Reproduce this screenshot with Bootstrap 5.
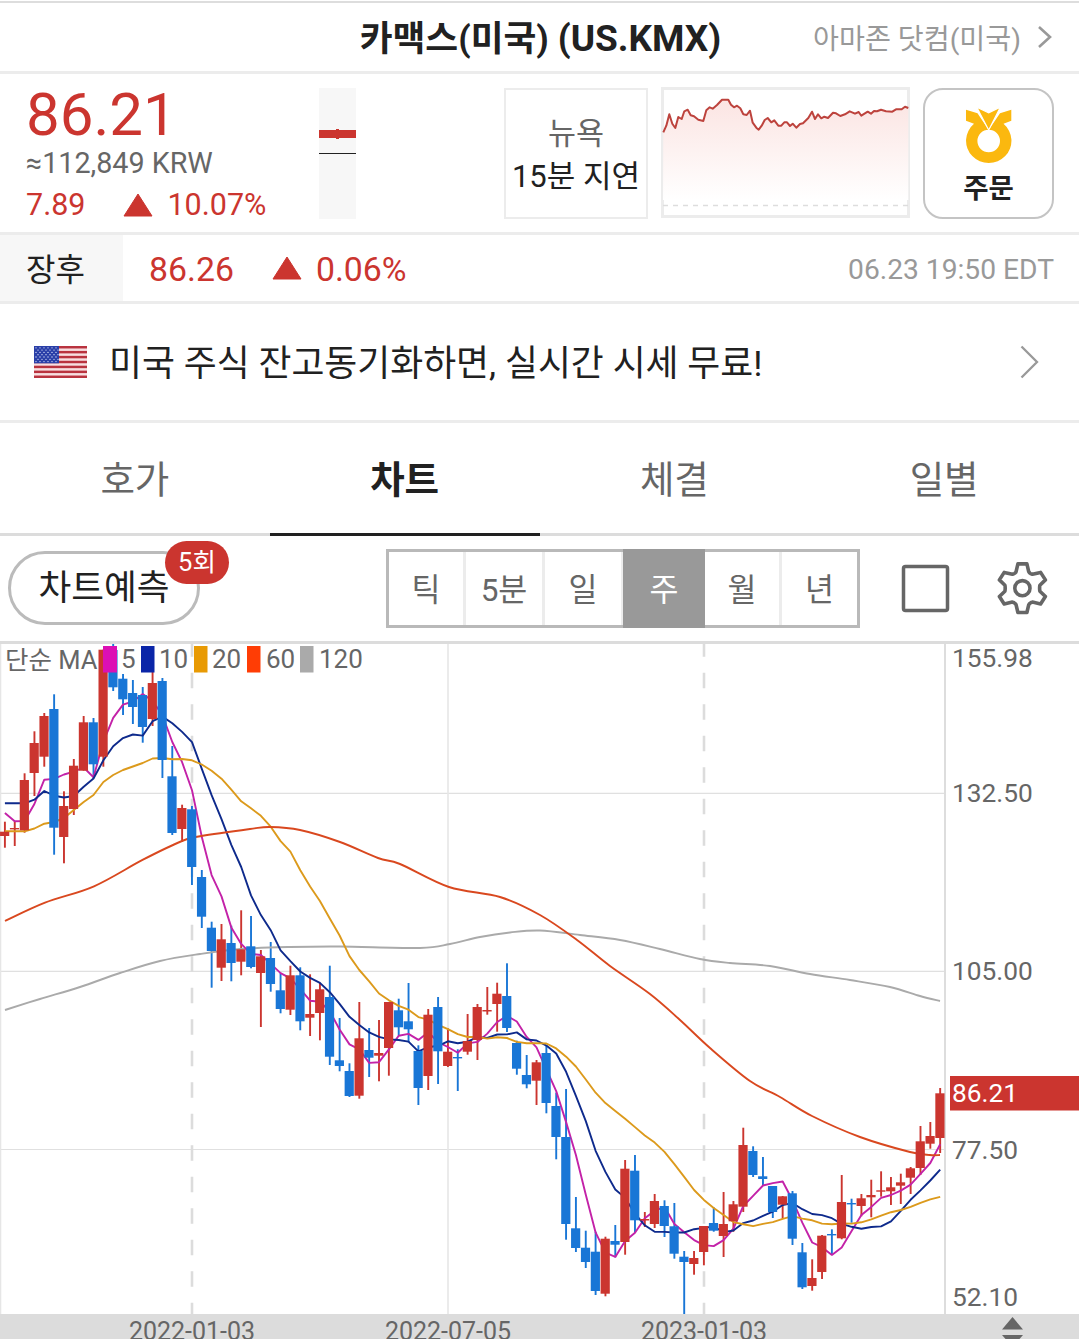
<!DOCTYPE html>
<html lang="ko">
<head>
<meta charset="utf-8">
<meta name="viewport" content="width=device-width, initial-scale=1">
<title>카맥스(미국) (US.KMX)</title>
<link href="https://cdn.jsdelivr.net/npm/bootstrap@5.3.0/dist/css/bootstrap.min.css" rel="stylesheet">
<style>
:root{--up:#cb352f;--ink:#212121;--mid:#666;--pale:#999;--rule:#ececec}
body{font-family:Roboto,"Noto Sans CJK KR",sans-serif;color:var(--ink);background:#fff;width:1079px;height:1339px;overflow:hidden;line-height:1}
svg{display:block;flex:none}
.t-up{color:var(--up)}.t-mid{color:var(--mid)}.t-pale{color:var(--pale)}
.w-line{white-space:nowrap}
.title-bar{border-top:2px solid #ddd;border-bottom:3px solid var(--rule);margin-top:1px;height:73px;padding:3px 0 0 2px}
.title-bar .side{flex:1 1 0;padding-right:27px}
.title-main{font-size:35.7px;font-weight:700}
.title-main span{font-size:37px}
.next-stock{font-size:28.2px}
.next-stock span{padding-top:3px}
.quote-bar{height:161px;border-bottom:3px solid var(--rule);padding:14px 25px 0 26px}
.quote-nums{width:293px}
.px-now{font-size:60px;height:53px;line-height:54px}
.px-krw{font-size:28.7px;height:45px;line-height:45px}
.px-chg{font-size:30.500px;height:37px;line-height:37px}
.day-range{width:37px;height:131px;background:#f7f7f7}
.market-box{width:144px;height:131px;border:2px solid var(--rule);margin-left:148px;padding-top:21px}
.spark-box{width:249px;height:131px;border:3px solid var(--rule);margin-left:13px;margin-top:-1px}
.order-btn{width:131px;height:131px;border:2px solid #c4c4c4;border-radius:20px;margin-left:13px;background:#fff;padding-top:17px;color:var(--ink)}
.after-bar{height:69px;border-bottom:3px solid var(--rule);font-size:33.8px;padding-right:25px}
.after-bar>*{padding-top:3px}
.after-tag{width:123px;background:#f7f7f7;padding-left:26px;font-size:32px}
.promo-bar{height:119px;border-bottom:3px solid var(--rule);padding:0 40px 0 34px;font-size:35.8px}
.view-tabs{height:113px;font-size:37.5px}
.view-tabs .nav-link{border-radius:0;border-bottom:3px solid #dcdcdc;color:var(--mid);height:113px;padding:5px 0 0}
.view-tabs .nav-link.active{background:none;color:var(--ink);font-weight:700;border-color:var(--ink)}
.tool-bar{height:108px;border-bottom:3px solid #dcdcdc;padding:13px 31px 0 8px}
.predict-btn{width:192px;height:74px;border:3px solid #bbb;border-radius:37px;font-size:35.6px;margin-top:2px;padding-top:2px;background:#fff}
.predict-badge{left:154px;top:-13px;width:64px;height:43px;border-radius:22px;background:var(--up);color:#fff;font-size:25.5px}
.period-set{width:474px;height:79px;border:3px solid #b9b9b9;margin-left:186px;font-size:31.5px;color:var(--mid)}
.period-set>div{width:79px;border-right:3px solid #ececec;padding-top:4px}
.period-set>div:first-child{width:77px}
.period-set>div:last-child{border:0;width:75px}
.period-set>.on{background:#999;color:#fff;width:82px;margin:-3px 0 -3px -1px;border:0}
.period-set>.after-on{width:77px}
.full-icon{margin:15px 0 0 41px}.gear-icon{margin:12px 0 0 auto}
</style>
</head>
<body>
<header class="title-bar d-flex align-items-center w-line">
  <div class="side"></div>
  <div class="title-main">카맥스(미국) <span>(US.KMX)</span></div>
  <div class="side d-flex justify-content-end align-items-center t-pale next-stock"><span>아마존 닷컴(미국)</span>
    <svg class="ms-3" width="15" height="24" viewBox="0 0 15 24" fill="none" stroke="#999" stroke-width="2.6"><path d="M2 1L13 11L2 21"/></svg></div>
</header>

<section class="quote-bar d-flex w-line">
  <div class="quote-nums">
    <div class="px-now t-up">86.21</div>
    <div class="px-krw t-mid">≈112,849 KRW</div>
    <div class="px-chg t-up d-flex align-items-center"><span>7.89</span>
      <svg width="30" height="24" viewBox="0 0 30 24" style="margin:0 14px 0 38px"><path d="M15 1L29 23H1Z" fill="#cb352f" stroke="#cb352f" stroke-linejoin="round"/></svg><span>10.07%</span></div>
  </div>
  <div class="day-range"><svg width="37" height="131"><path d="M0 42h37v8H0zM17 41h3v10h-3z" fill="#cb352f"/><path d="M0 65h37v1H0z" fill="#212121"/></svg></div>
  <div class="market-box d-flex flex-column align-items-center">
    <div class="t-mid" style="font-size:30.5px;line-height:46px">뉴욕</div>
    <div style="font-size:31px;line-height:39px">15분 지연</div>
  </div>
  <div class="spark-box">
    <svg width="243" height="125" viewBox="664 90 243 125" overflow="visible">
      <defs><linearGradient id="fade" x1="0" y1="98" x2="0" y2="200" gradientUnits="userSpaceOnUse"><stop offset="0" stop-color="#fbe4e2"/><stop offset="1" stop-color="#fff"/></linearGradient></defs>
      <path id="sparkFill" fill="url(#fade)"/>
      <path d="M663 205.5H908" stroke="#ddd" stroke-width="1.3" stroke-dasharray="5 5"/>
      <path id="sparkLine" fill="none" stroke="#bd433d" stroke-width="2" stroke-linejoin="round"/>
    </svg>
  </div>
  <button class="order-btn d-flex flex-column align-items-center">
    <svg width="48" height="57" viewBox="965 107 48 57"><path fill="#fbb80f" fill-rule="evenodd" d="M966 109.700L977.500 113.300L988.700 130L1000 113.300L1011.300 109.700V120.700L1003.500 123.800A22.700 22.300 0 1 1 974 123.800L966 120.700ZM988.700 129.700A11.300 11.300 0 1 0 988.700 152.300A11.300 11.300 0 1 0 988.700 129.700Z"/><path fill="#fbb80f" stroke="#fff" stroke-width="1.2" d="M976.800 107.300L988.700 112.800L1000.300 107.300L989 129.500H988.400Z"/></svg>
    <span class="fw-bold" style="font-size:27.5px;line-height:49px">주문</span>
  </button>
</section>

<section class="after-bar d-flex align-items-stretch w-line">
  <div class="after-tag d-flex align-items-center">장후</div>
  <div class="d-flex align-items-center t-up" style="padding-left:26px"><span>86.26</span>
    <svg width="30" height="24" viewBox="0 0 30 24" style="margin:-3px 14px 0 38px"><path d="M15 1L29 23H1Z" fill="#cb352f" stroke="#cb352f" stroke-linejoin="round"/></svg><span>0.06%</span></div>
  <div class="ms-auto d-flex align-items-center t-pale" style="font-size:28.2px;padding-top:5px">06.23 19:50 EDT</div>
</section>

<section class="promo-bar d-flex align-items-center w-line">
  <svg width="53" height="32" viewBox="0 0 53 32" id="flag"><rect width="53" height="32" fill="#f7dfe1"/></svg>
  <span style="margin-left:22px;padding-top:5px">미국 주식 잔고동기화하면, 실시간 시세 무료!</span>
  <svg class="ms-auto" width="19" height="34" viewBox="0 0 19 34" fill="none" stroke="#999" stroke-width="2.3"><path d="M1.5 1.5L17 17L1.5 32.5"/></svg>
</section>

<nav class="view-tabs nav nav-pills nav-justified">
  <a class="nav-link d-flex align-items-center justify-content-center">호가</a>
  <a class="nav-link active d-flex align-items-center justify-content-center">차트</a>
  <a class="nav-link d-flex align-items-center justify-content-center">체결</a>
  <a class="nav-link d-flex align-items-center justify-content-center">일별</a>
</nav>

<section class="tool-bar d-flex align-items-start w-line">
  <div class="predict-btn position-relative d-flex align-items-center justify-content-center">차트예측<span class="predict-badge position-absolute d-flex align-items-center justify-content-center">5회</span></div>
  <div class="period-set d-flex text-center">
    <div class="d-flex align-items-center justify-content-center">틱</div>
    <div class="d-flex align-items-center justify-content-center">5분</div>
    <div class="d-flex align-items-center justify-content-center">일</div>
    <div class="on d-flex align-items-center justify-content-center">주</div>
    <div class="after-on d-flex align-items-center justify-content-center">월</div>
    <div class="d-flex align-items-center justify-content-center">년</div>
  </div>
  <svg class="full-icon" width="49" height="49"><rect x="2.5" y="2.5" width="44" height="44" rx="2" fill="none" stroke="#666" stroke-width="3.5"/></svg>
  <svg class="gear-icon" width="52" height="54" viewBox="-26.400 -27.200 52 54" fill="none" stroke="#666" stroke-width="3.600" stroke-linejoin="round"><path d="M-4.500 -24.300H4.500L6.300 -16.600Q6.800 -15.200 8.200 -14.600L10 -13.900L18.200 -15.800L23 -8.300L17.500 -3Q16.900 0 17.500 3L23 8.300L18.200 15.800L10 13.900L8.200 14.600Q6.800 15.200 6.300 16.600L4.500 24.300H-4.500L-6.300 16.600Q-6.800 15.200 -8.200 14.600L-10 13.900L-18.200 15.800L-23 8.300L-17.500 3Q-16.900 0 -17.500 -3L-23 -8.300L-18.200 -15.800L-10 -13.900L-8.200 -14.600Q-6.800 -15.200 -6.300 -16.600Z"/><circle r="7.600"/></svg>
</section>

<svg id="chart" width="1079" height="695" viewBox="0 644 1079 695" font-family="Roboto,'Noto Sans CJK KR',sans-serif" fill="#666">
  <g fill="none" stroke="#e0e0e0" stroke-width="1.2"><path d="M0 793.3H945M0 971.3H945M0 1149.5H945"/><path d="M448 644V1314M0.5 644V1314" stroke="#e6e6e6" stroke-width="1.6"/><path d="M945 644V1314" stroke="#ddd" stroke-width="2"/>
  <path d="M192 641.2V1314M704 641.2V1314" stroke="#dcdcdc" stroke-width="2.6" stroke-dasharray="15.5 16"/></g>
  <g id="wicks"></g>
  <g id="averages" fill="none" stroke-width="1.9" stroke-linejoin="round"></g>
  <g id="bodies"></g>
  <g font-size="26">
    <text x="5" y="668.5" font-size="25.5">단순 MA</text>
    <rect x="103" y="646" width="14" height="26.500" fill="#dc10b4"/><text x="121" y="668">5</text>
    <rect x="141" y="646" width="13.500" height="26.500" fill="#0a25a8"/><text x="159" y="668">10</text>
    <rect x="194" y="646" width="13.500" height="26.500" fill="#e89a04"/><text x="212" y="668">20</text>
    <rect x="247" y="646" width="13.500" height="26.500" fill="#ff3d05"/><text x="266" y="668">60</text>
    <rect x="300" y="646" width="13.500" height="26.500" fill="#aaa"/><text x="319" y="668">120</text>
    <g font-size="26.3"><text x="952" y="667">155.98</text><text x="952" y="802">132.50</text><text x="952" y="980">105.00</text><text x="952" y="1159">77.50</text><text x="952" y="1306">52.10</text></g>
    <rect x="950" y="1076" width="129" height="34.500" fill="#cb352f"/><text x="952" y="1102" fill="#fff" font-size="26.3">86.21</text>
  </g>
  <rect y="1314" width="1079" height="25" fill="#dcdcdc"/>
  <g font-size="25" text-anchor="middle"><text x="192" y="1340">2022-01-03</text><text x="448" y="1340">2022-07-05</text><text x="704" y="1340">2023-01-03</text></g>
  <path d="M1012.500 1317L1023 1329.500H1002ZM1002 1335H1023L1012.500 1347Z"/>
</svg>

<script>
const NS='http://www.w3.org/2000/svg';
function add(parent,tag,attrs){const e=document.createElementNS(NS,tag);for(const k in attrs)e.setAttribute(k,attrs[k]);parent.appendChild(e);}
// weekly candles: direction, body top, body bottom, high, low
const weeks=`R 831.7 836 821.7 847.7;R 828 829.3 821 846;R 780 830.3 773.3 832.7;R 743 773 731.3 796;R 716 756.7 713 766.7;B 709 827.7 694.3 854.7;R 806 837 791.3 863.3;R 765.7 809 759 815;R 722.3 770.7 716 770.7;B 722.3 764.3 718 778.3;R 649.7 756.7 649.7 766.7;B 650 687.3 644 691;B 678.7 699.3 674 715;B 693 707 680 724;B 695 727 687 742.7;R 683 719 672 726;B 681 760 678 778;B 776.3 833 746 835;R 808 829 804.7 842;B 809.3 867 806 885;B 877 916.7 870 928;B 927.7 951 921.7 987.7;R 939.3 967.7 924 981;B 943 963 925.7 981.3;R 949.3 961.7 910.3 975.3;B 946.3 967 916 968.3;R 956.3 973 950 1027;B 958 984 942 991.7;B 990.3 1009 973 1013.3;R 975.3 1009.7 965.7 1015;B 975.3 1021.3 967.3 1030.3;R 1014 1017.7 974.3 1036;R 989.3 1013 982.7 1040.3;B 997 1056.7 965.7 1065;B 1060.3 1066 1018 1071.3;B 1071 1096 1063.3 1097;R 1038.3 1095.7 1002 1098.7;B 1050 1057.7 1028 1077;R 1053 1055.7 1020 1081.3;R 1002 1048 1002 1075.7;B 1010.3 1027.3 998.7 1035.7;B 1021.3 1029.3 983 1042.3;B 1051 1088 1045.3 1105;R 1014.7 1076 1009 1090;B 1007 1051.3 997 1084;R 1051.7 1066 1028.3 1067;B 1057 1058.3 1049.3 1091;R 1041 1051.7 1014 1054.7;R 1007 1040 1004 1060;R 1010 1011.5 987 1014.7;R 993.7 1004 982.7 1031.7;B 996 1028 963.3 1032;B 1043 1068.7 1040.7 1074.7;B 1075 1084.3 1055 1088.3;R 1062.3 1080.7 1060 1105;B 1053 1103 1046 1113.3;B 1106 1137 1092.7 1159.3;B 1137 1224 1089 1239.7;B 1228.3 1248 1197 1252;B 1247.7 1262 1230.7 1268;B 1251.7 1291 1231.7 1295;R 1238.7 1293.7 1236.7 1296.3;B 1241 1244.7 1225 1257.3;R 1168.7 1242 1160 1254.7;B 1170.7 1220.3 1155 1233;R 1219 1220.5 1212 1227;R 1201 1224 1194 1228;B 1206 1226 1200.3 1237;B 1226.3 1253.7 1203 1258.7;B 1256.7 1262 1251 1314;R 1258 1264 1251 1274.7;R 1226 1252 1226 1265.3;B 1223 1230.7 1207.3 1231.7;R 1224 1236 1192 1257;R 1204.3 1221.3 1201 1231.7;R 1145 1206.7 1127.7 1212;B 1151 1175 1146.3 1177;B 1176.3 1179 1157 1186;B 1186 1212 1186 1218;R 1196.3 1204.7 1196 1218.7;B 1193.3 1238.7 1191 1245;B 1252.3 1287.3 1243 1289;R 1278 1286 1259.3 1290.7;R 1235.7 1272 1235 1279;B 1234 1235 1229.3 1255;R 1202 1238.3 1175 1239.3;B 1203 1204 1198.7 1222.7;R 1198.3 1206 1194 1216.3;R 1195 1197.3 1179.7 1217.3;R 1190.3 1191.3 1171.3 1196.7;R 1187.3 1191.3 1177 1205;R 1182.3 1185.7 1173.7 1204;R 1168.3 1177.7 1167 1194;R 1141.3 1168 1126 1175;R 1136 1143.7 1122 1148.7;R 1093.3 1138 1088 1153`.split(';').map(r=>{const a=r.split(' ');return[a[0],...a.slice(1).map(Number)]});
const X=i=>4.9+9.845*i, wicks=document.getElementById('wicks'), bodies=document.getElementById('bodies'), avg=document.getElementById('averages');
weeks.forEach(([d,t,b,h,l],i)=>{
  const c=d==='R'?'#cb352f':'#1976d6', x=X(i);
  add(wicks,'rect',{x:x-.95,y:h,width:1.9,height:l-h,fill:c});
  add(bodies,'rect',{x:x-4.85,y:t,width:9.2,height:Math.max(1.4,b-t),fill:c});
});
const close=weeks.map(w=>w[0]==='R'?w[1]:w[2]);
function line(pts,color){add(avg,'path',{d:'M'+pts.map(p=>p[0].toFixed(1)+' '+p[1].toFixed(1)).join('L'),stroke:color});}
function moving(n,lead){return close.map((_,i)=>[X(i),i<lead.length?lead[i]:close.slice(i-n+1,i+1).reduce((a,b)=>a+b)/n]);}
// smooth curve through sparse points
function curve(p,color){let d='M'+p[0];for(let i=0;i<p.length-1;i++){const a=p[i-1]||p[i],b=p[i],c=p[i+1],e=p[i+2]||c;d+=`C${b[0]+(c[0]-a[0])/6} ${b[1]+(c[1]-a[1])/6} ${c[0]-(e[0]-b[0])/6} ${c[1]-(e[1]-b[1])/6} ${c[0]} ${c[1]}`;}add(avg,'path',{d,stroke:color});}
curve([[5,1010],[40,999],[80,987],[120,973],[160,961],[200,954],[240,949],[290,947],[340,946.5],[420,948],[450,944],[480,937],[510,932.5],[540,930.5],[580,935],[620,940],[660,949],[700,959],[730,963],[770,966],[810,974],[850,980],[890,987],[920,996],[940,1001]],'#aaa');
line(moving(5,[813,821.3,821,804]),'#c322a8');
line(moving(10,[803.3,803.3,803.3,799.7,791,795.7,797.5,796,786.7]),'#0e2a8c');
line(moving(20,[831.3,831.3,831.3,828.5,823.7,822,818,810,802,795,782,775,770,766.5,763,758.5,758,759.3,759]),'#dc9a1c');
curve([[5,921],[45,902.7],[94,886.3],[143,859.7],[182,841],[200,836.3],[250,829],[270,827],[300,830],[340,842],[378,858],[400,864],[449,887],[500,897],[540,915],[577,940],[610,966],[650,994],[680,1020],[710,1048],[750,1081],[780,1097],[812,1116],[860,1137],[910,1152],[930,1155],[940,1155]],'#d9481f');
// intraday sparkline, three units per pixel
const s=[25,157,34,137,43,103,52,131,61,144,70,111,80,117,88,94,98,89,107,106,117,109,130,119,145,123,154,91,164,82,173,86,186,75,201,59,220,59,228,74,237,82,246,77,256,85,265,103,275,105,285,92,293,128,304,143,311,149,320,137,329,120,338,114,349,127,358,121,370,137,379,137,388,127,396,127,405,138,413,131,424,143,435,132,444,130,460,114,471,95,480,117,489,103,499,115,508,110,519,114,534,98,543,100,556,108,570,103,584,94,600,101,611,96,619,107,638,95,648,101,657,93,666,94,678,89,693,94,712,95,723,88,740,88,750,80,760,84];
let sp=[];for(let i=0;i<s.length;i+=2)sp.push((655+s[i]/3).toFixed(1)+' '+(80+s[i+1]/3).toFixed(1));
document.getElementById('sparkLine').setAttribute('d','M'+sp.join('L'));
document.getElementById('sparkFill').setAttribute('d','M'+sp.join('L')+'V200H663Z');
// flag stripes and stars
const f=document.getElementById('flag');
for(let i=0;i<13;i+=2)add(f,'rect',{x:0,y:i*32/13,width:53,height:32/13,fill:'#b9333f'});
add(f,'rect',{width:25,height:17.3,fill:'#2a3fa8'});
for(let r=0;r<7;r++)for(let c=0;c<6;c++)add(f,'circle',{cx:2+c*4+(r%2)*2,cy:1.8+r*2.3,r:.65,fill:'#dfe4fa'});
</script>
<script src="https://cdn.jsdelivr.net/npm/bootstrap@5.3.0/dist/js/bootstrap.bundle.min.js"></script>
</body>
</html>
